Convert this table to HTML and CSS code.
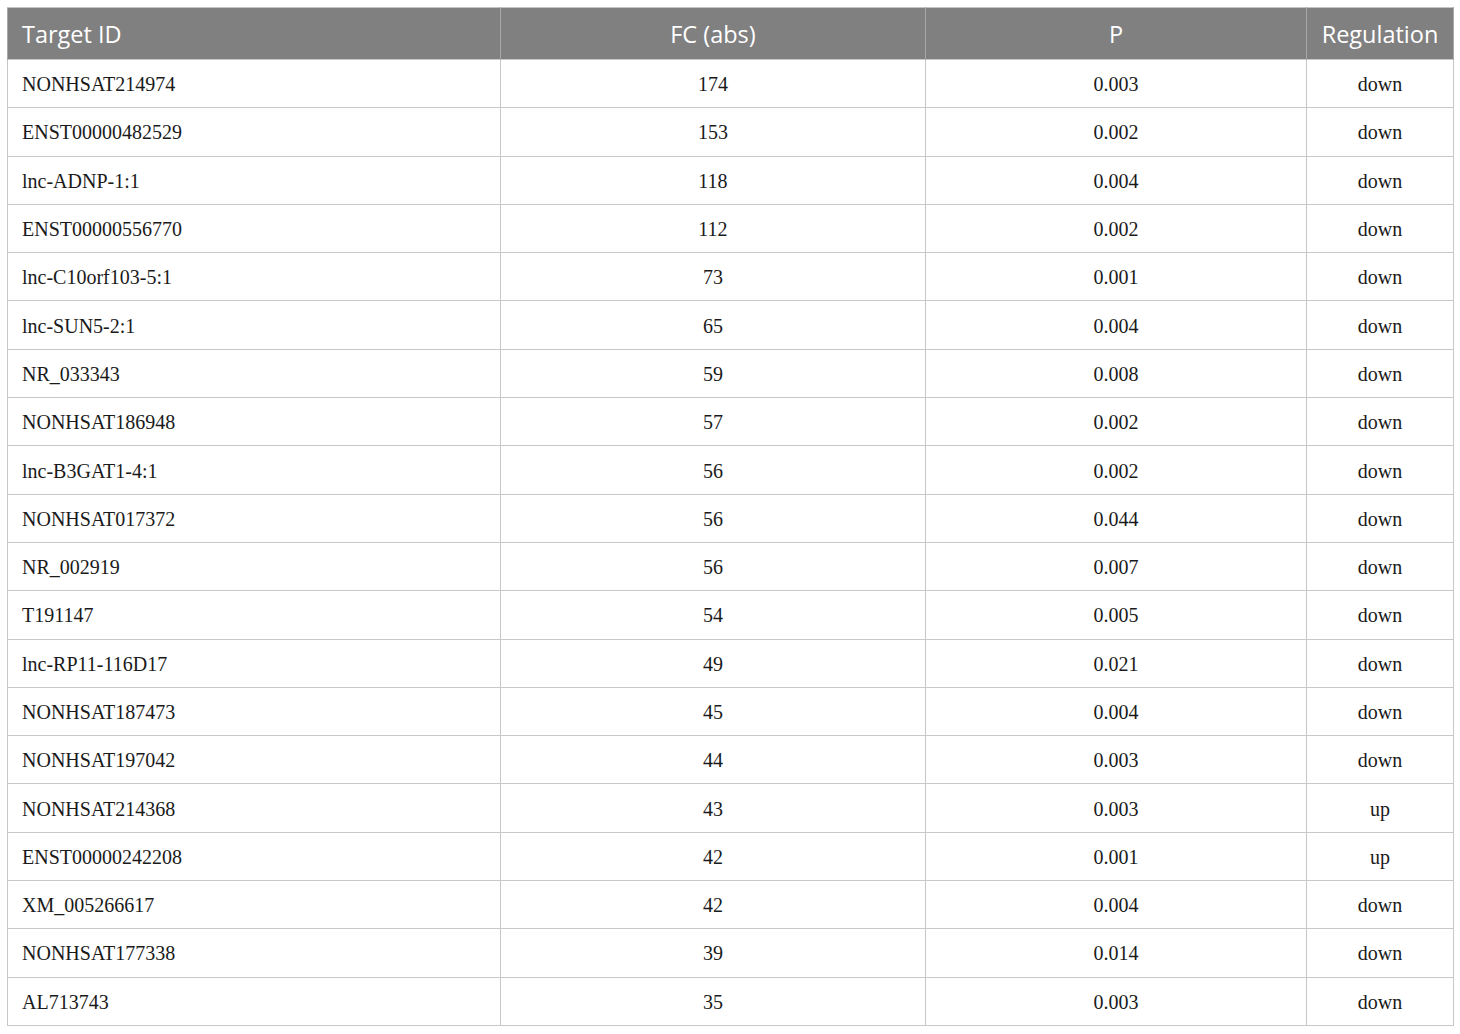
FILE: index.html
```html
<!DOCTYPE html>
<html>
<head>
<meta charset="utf-8">
<link rel="stylesheet" href="styles.css">
</head>
<body>
<table class="data">
<colgroup>
<col class="c1"><col class="c2"><col class="c3"><col class="c4">
</colgroup>
<thead>
<tr><th class="left">Target ID</th><th>FC (abs)</th><th>P</th><th>Regulation</th></tr>
</thead>
<tbody>
<tr><td class="left">NONHSAT214974</td><td>174</td><td>0.003</td><td>down</td></tr>
<tr><td class="left">ENST00000482529</td><td>153</td><td>0.002</td><td>down</td></tr>
<tr><td class="left">lnc-ADNP-1:1</td><td>118</td><td>0.004</td><td>down</td></tr>
<tr><td class="left">ENST00000556770</td><td>112</td><td>0.002</td><td>down</td></tr>
<tr><td class="left">lnc-C10orf103-5:1</td><td>73</td><td>0.001</td><td>down</td></tr>
<tr><td class="left">lnc-SUN5-2:1</td><td>65</td><td>0.004</td><td>down</td></tr>
<tr><td class="left">NR_033343</td><td>59</td><td>0.008</td><td>down</td></tr>
<tr><td class="left">NONHSAT186948</td><td>57</td><td>0.002</td><td>down</td></tr>
<tr><td class="left">lnc-B3GAT1-4:1</td><td>56</td><td>0.002</td><td>down</td></tr>
<tr><td class="left">NONHSAT017372</td><td>56</td><td>0.044</td><td>down</td></tr>
<tr><td class="left">NR_002919</td><td>56</td><td>0.007</td><td>down</td></tr>
<tr><td class="left">T191147</td><td>54</td><td>0.005</td><td>down</td></tr>
<tr><td class="left">lnc-RP11-116D17</td><td>49</td><td>0.021</td><td>down</td></tr>
<tr><td class="left">NONHSAT187473</td><td>45</td><td>0.004</td><td>down</td></tr>
<tr><td class="left">NONHSAT197042</td><td>44</td><td>0.003</td><td>down</td></tr>
<tr><td class="left">NONHSAT214368</td><td>43</td><td>0.003</td><td>up</td></tr>
<tr><td class="left">ENST00000242208</td><td>42</td><td>0.001</td><td>up</td></tr>
<tr><td class="left">XM_005266617</td><td>42</td><td>0.004</td><td>down</td></tr>
<tr><td class="left">NONHSAT177338</td><td>39</td><td>0.014</td><td>down</td></tr>
<tr><td class="left">AL713743</td><td>35</td><td>0.003</td><td>down</td></tr>
</tbody>
</table>
</body>
</html>
```

FILE: styles.css
```css
html, body {
  margin: 0;
  padding: 0;
  background: #ffffff;
}
body {
  padding: 7px 0 0 7px;
}
.data {
  border-collapse: collapse;
  table-layout: fixed;
  width: 1446px;
  border: 1px solid #c4c4c4;
}
.c1 { width: 493px; }
.c2 { width: 425px; }
.c3 { width: 381px; }
.c4 { width: 147px; }
.data th {
  background: #808080;
  color: #ffffff;
  font-family: "Open Sans", "Noto Sans", sans-serif;
  font-weight: normal;
  font-size: 23.5px;
  height: 52px;
  padding: 1px 14px 0;
  text-align: center;
  vertical-align: middle;
  border-left: 1px solid #a8a8a8;
  border-right: 1px solid #a8a8a8;
  border-top: 1px solid #c4c4c4;
  border-bottom: 0;
  box-sizing: border-box;
}
.data td {
  font-family: "Liberation Serif", "Times New Roman", serif;
  font-size: 20px;
  color: #1a1a1a;
  height: 48.3px;
  padding: 2px 14px 0;
  text-align: center;
  vertical-align: middle;
  border: 1px solid #c8c8c8;
  box-sizing: border-box;
}
.data .left {
  text-align: left;
}
```
